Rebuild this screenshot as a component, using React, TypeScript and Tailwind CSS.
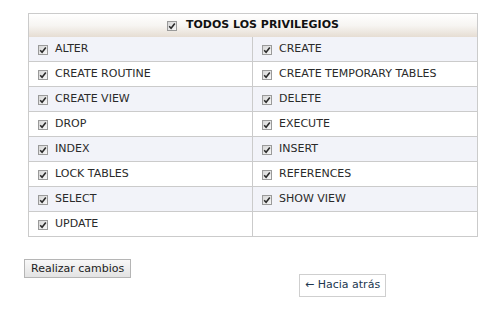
import React from 'react';

const privileges: [string, string][] = [
  ['ALTER', 'CREATE'],
  ['CREATE ROUTINE', 'CREATE TEMPORARY TABLES'],
  ['CREATE VIEW', 'DELETE'],
  ['DROP', 'EXECUTE'],
  ['INDEX', 'INSERT'],
  ['LOCK TABLES', 'REFERENCES'],
  ['SELECT', 'SHOW VIEW'],
  ['UPDATE', ''],
];

// Old-style grey checkbox, always checked
const Check = () => (
  <span className="inline-flex items-center justify-center w-[10px] h-[10px] border border-[#9a9a9a] bg-gradient-to-br from-[#d6d6d6] to-[#f7f7f7] shrink-0">
    <svg width="8" height="8" viewBox="0 0 8 8">
      <path d="M1.2 4.2 L3.1 6.2 L6.8 1.6" fill="none" stroke="#2a2a2a" strokeWidth="1.6" />
    </svg>
  </span>
);

const Cell = ({ label, last }: { label: string; last?: boolean }) => (
  <div className={`flex items-center gap-[7px] pl-[9px] h-[24px] pt-[1px] ${last ? '' : 'border-r border-[#cbcbcb]'}`}>
    {label && (
      <>
        <Check />
        <span>{label}</span>
      </>
    )}
  </div>
);

export default function App() {
  return (
    <div
      className="w-[492px] h-[310px] bg-white pl-[24px] pt-[13px] text-[11px] text-[#2a2a2a]"
      style={{ fontFamily: 'Verdana, "DejaVu Sans", sans-serif' }}
    >
      <div className="ml-[4px] w-[450px] border border-[#cbcbcb]">
        {/* Header */}
        <div className="flex items-center justify-center gap-[9px] h-[23px] bg-gradient-to-b from-white via-[#f7f5f2] to-[#e6ddd3] font-bold text-[#111]">
          <Check />
          <span>TODOS LOS PRIVILEGIOS</span>
        </div>
        {privileges.map(([a, b], i) => (
          <div
            key={a}
            className={`grid grid-cols-2 ${i % 2 === 0 ? 'bg-[#f2f3f9]' : 'bg-white'} ${i < privileges.length - 1 ? 'border-b border-[#cbcbcb]' : ''}`}
          >
            <Cell label={a} />
            <Cell label={b} last />
          </div>
        ))}
      </div>

      <div className="mt-[22px]">
        <button className="h-[19px] px-[6px] border border-[#b5b5b5] bg-gradient-to-b from-[#f8f8f8] to-[#e3e3e3] text-[11px] text-[#222] leading-none">
          Realizar cambios
        </button>
      </div>

      <div className="mt-[-4px] pl-[275px]">
        <a className="inline-flex items-center h-[23px] px-[5px] border border-[#cfcfcf] bg-white text-[#21374f]">
          ← Hacia atrás
        </a>
      </div>
    </div>
  );
}
